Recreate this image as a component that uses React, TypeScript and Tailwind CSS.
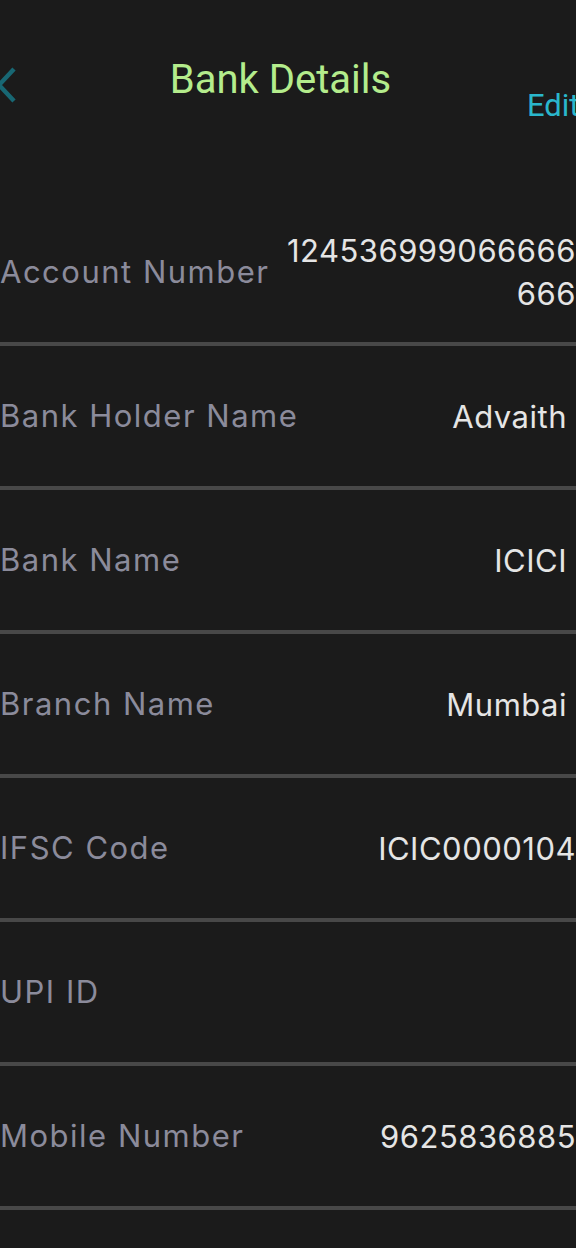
import React from 'react'

type Row = {
  label: string
  lines: string[]
  flush?: boolean
}

const rows: Row[] = [
  { label: 'Account Number', lines: ['124536999066666', '666'], flush: true },
  { label: 'Bank Holder Name', lines: ['Advaith'] },
  { label: 'Bank Name', lines: ['ICICI'] },
  { label: 'Branch Name', lines: ['Mumbai'] },
  { label: 'IFSC Code', lines: ['ICIC0000104'], flush: true },
  { label: 'UPI ID', lines: [] },
  { label: 'Mobile Number', lines: ['9625836885'], flush: true },
]

function DetailRow({ row }: { row: Row }) {
  return (
    <div>
      <div className="flex h-[140px] items-center justify-between">
        <span className="text-[31px] tracking-[1.5px] text-[#8b8b9b] whitespace-nowrap">{row.label}</span>
        <div
          className={
            row.flush
              ? 'text-right text-[31px] tracking-[0.5px] leading-[43px] text-[#e5e5e5] whitespace-nowrap'
              : 'text-right text-[31px] tracking-[0.5px] leading-[43px] text-[#e5e5e5] whitespace-nowrap pr-[9px]'
          }
        >
          {row.lines.map((l) => (
            <div key={l}>{l}</div>
          ))}
        </div>
      </div>
      <div className="h-1 bg-[#484848]" />
    </div>
  )
}

export default function App() {
  return (
    <div className="min-h-[1248px] w-[576px] overflow-hidden bg-[#1b1b1b] font-['Inter',sans-serif]">
      <div className="flex h-[202px] items-start">
        <div className="w-[40px] shrink-0 pt-[67px]">
          <svg width="20" height="36" viewBox="0 0 20 36" className="-ml-[4px]">
            <path d="M18 2 L3 18 L18 34" fill="none" stroke="#186773" strokeWidth="4.5" />
          </svg>
        </div>
        <h1 className="flex-1 pt-[54px] pr-[6px] text-center font-['Roboto',sans-serif] text-[40px] leading-[52px] text-[#b4ec8c]">
          Bank Details
        </h1>
        <span className="w-[49px] shrink-0 pt-[85px] font-['Roboto',sans-serif] text-[31px] leading-[42px] text-[#2ab7cc] whitespace-nowrap">
          Edit
        </span>
      </div>
      {rows.map((r) => (
        <DetailRow key={r.label} row={r} />
      ))}
    </div>
  )
}
